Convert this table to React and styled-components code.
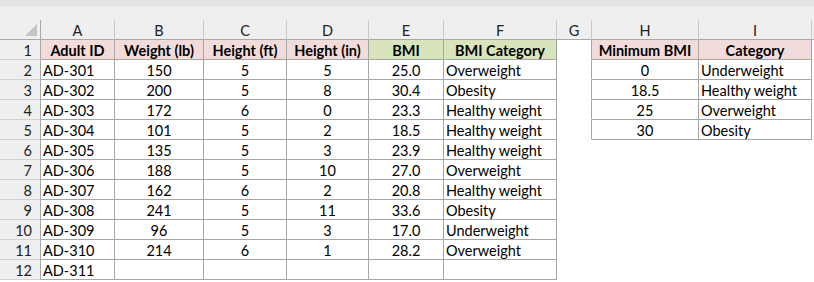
import styled, { createGlobalStyle } from "styled-components";

const GlobalStyle = createGlobalStyle`
  html, body {
    margin: 0;
    padding: 0;
    background: #ffffff;
  }
  body {
    font-family: Lato, "Open Sans", "Liberation Sans", sans-serif;
    font-size: 14.5px;
    color: #000;
  }
`;

const Page = styled.div`
  width: 814px;
  height: 282px;
  overflow: hidden;
  background: #ffffff;
`;

const TopBar = styled.div`
  height: 20px;
  background: linear-gradient(to bottom, #e4e4e4 0, #e4e4e4 6px, #efefef 6px);
`;

const Sheet = styled.div`
  display: grid;
  grid-template-columns: 41px 74px 89px 83px 82px 75px 113px 35px 107px 113px 1fr;
  grid-auto-rows: 20px;
`;

const Corner = styled.div`
  position: relative;
  background: #efefef;
  border-right: 1px solid #a8a8a8;
  border-bottom: 1px solid #a8a8a8;
  &::after {
    content: "";
    position: absolute;
    right: 3px;
    bottom: 3px;
    width: 0;
    height: 0;
    border-left: 12px solid transparent;
    border-bottom: 12px solid #c4c4c4;
  }
`;

const ColHead = styled.div`
  background: #efefef;
  border-right: 1px solid ${(p) => (p.$blank ? "transparent" : "#c9c9c9")};
  border-bottom: 1px solid #a8a8a8;
  text-align: center;
  padding-top: 1px;
  line-height: 19px;
  color: #222;
`;

const RowHead = styled.div`
  background: #efefef;
  border-right: 1px solid #a8a8a8;
  border-bottom: 1px solid #d2d2d2;
  text-align: right;
  padding-right: 8px;
  padding-top: 1px;
  line-height: 19px;
  color: #222;
`;

const Cell = styled.div`
  box-sizing: border-box;
  background: ${(p) => p.$fill || "#ffffff"};
  border-right: 1px solid ${(p) => (p.$right ? "#a6a6a6" : "transparent")};
  border-bottom: 1px solid ${(p) => (p.$bottom ? "#a6a6a6" : "transparent")};
  text-align: ${(p) => p.$align || "left"};
  font-weight: ${(p) => (p.$bold ? 700 : 400)};
  padding: 1px 2px 0;
  line-height: 19px;
  white-space: nowrap;
  overflow: hidden;
`;

const PINK = "#f2dcdb";
const GREEN = "#d8e4bc";

const letters = ["A", "B", "C", "D", "E", "F", "G", "H", "I", ""];

const adults = [
  ["AD-301", 150, 5, 5, "25.0", "Overweight"],
  ["AD-302", 200, 5, 8, "30.4", "Obesity"],
  ["AD-303", 172, 6, 0, "23.3", "Healthy weight"],
  ["AD-304", 101, 5, 2, "18.5", "Healthy weight"],
  ["AD-305", 135, 5, 3, "23.9", "Healthy weight"],
  ["AD-306", 188, 5, 10, "27.0", "Overweight"],
  ["AD-307", 162, 6, 2, "20.8", "Healthy weight"],
  ["AD-308", 241, 5, 11, "33.6", "Obesity"],
  ["AD-309", 96, 5, 3, "17.0", "Underweight"],
  ["AD-310", 214, 6, 1, "28.2", "Overweight"],
  ["AD-311", "", "", "", "", ""],
];

const lookup = [
  ["0", "Underweight"],
  ["18.5", "Healthy weight"],
  ["25", "Overweight"],
  ["30", "Obesity"],
];

const mainAlign = ["left", "center", "center", "center", "center", "left"];

export default function App() {
  const rows = [];

  // row 1: headers
  rows.push(
    <RowHead key="rh1">1</RowHead>,
    ...["Adult ID", "Weight (lb)", "Height (ft)", "Height (in)"].map((t) => (
      <Cell key={t} $fill={PINK} $bold $align="center" $right $bottom>
        {t}
      </Cell>
    )),
    <Cell key="bmi" $fill={GREEN} $bold $align="center" $right $bottom>
      BMI
    </Cell>,
    <Cell key="cat" $fill={GREEN} $bold $align="center" $right $bottom>
      BMI Category
    </Cell>,
    <Cell key="g1" $right />,
    <Cell key="h1" $fill={PINK} $bold $align="center" $right $bottom>
      Minimum BMI
    </Cell>,
    <Cell key="i1" $fill={PINK} $bold $align="center" $right $bottom>
      Category
    </Cell>,
    <Cell key="x1" />
  );

  adults.forEach((r, i) => {
    const n = i + 2;
    const look = lookup[i];
    rows.push(
      <RowHead key={`rh${n}`}>{n}</RowHead>,
      ...r.map((v, c) => (
        <Cell key={`${n}-${c}`} $align={mainAlign[c]} $right $bottom>
          {v}
        </Cell>
      )),
      <Cell key={`g${n}`} $right={!!look} />,
      <Cell key={`h${n}`} $align="center" $right={!!look} $bottom={!!look}>
        {look ? look[0] : ""}
      </Cell>,
      <Cell key={`i${n}`} $right={!!look} $bottom={!!look}>
        {look ? look[1] : ""}
      </Cell>,
      <Cell key={`x${n}`} />
    );
  });

  return (
    <Page>
      <GlobalStyle />
      <TopBar />
      <Sheet>
        <Corner />
        {letters.map((l, i) => (
          <ColHead key={i} $blank={l === ""}>
            {l}
          </ColHead>
        ))}
        {rows}
      </Sheet>
    </Page>
  );
}
